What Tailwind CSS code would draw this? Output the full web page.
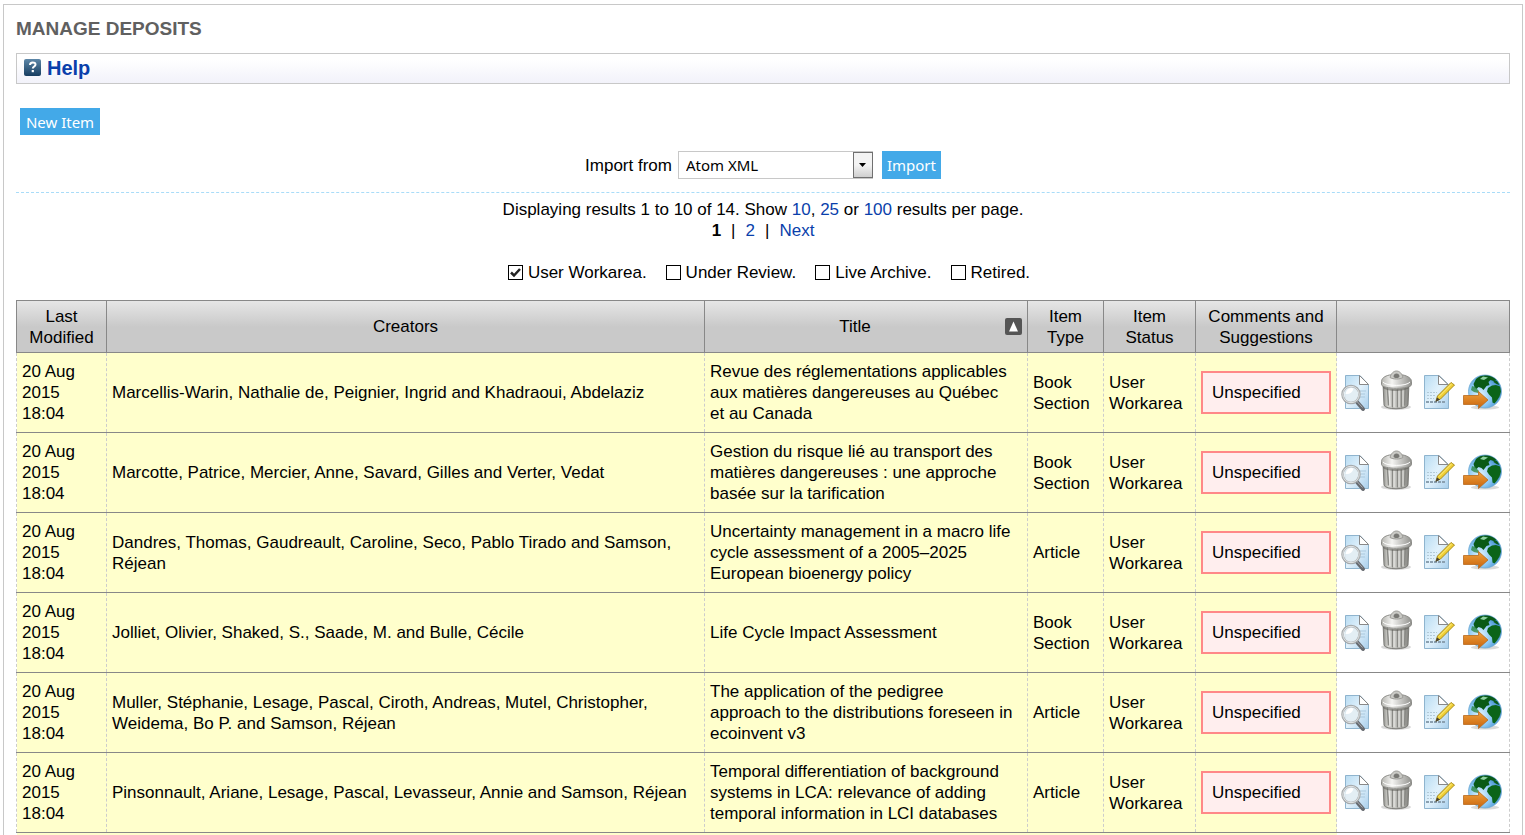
<!DOCTYPE html>
<html lang="en">
<head>
  <meta charset="UTF-8" />
  <title>Manage deposits</title>
  <script src="https://cdn.jsdelivr.net/npm/@tailwindcss/browser@4"></script>
</head>
<body class="bg-white text-black font-['Liberation_Sans',Arial,sans-serif] text-[17px] leading-[21px]">

  <!-- Icon sprite -->
  <svg class="absolute size-0" aria-hidden="true">
    <defs>
      <linearGradient id="paper" x1="0" y1="0" x2="1" y2="1">
        <stop offset="0" stop-color="#b9dcf2" /><stop offset=".5" stop-color="#e2f2fc" /><stop offset="1" stop-color="#a9cfec" />
      </linearGradient>
      <linearGradient id="metal" x1="0" x2="1">
        <stop offset="0" stop-color="#8d8d88" /><stop offset=".2" stop-color="#d8d8d4" /><stop offset=".5" stop-color="#c6c6c2" /><stop offset=".8" stop-color="#a9a9a5" /><stop offset="1" stop-color="#7f7f7b" />
      </linearGradient>
      <linearGradient id="lid" x1="0" y1="0" x2="1" y2="0">
        <stop offset="0" stop-color="#b5b5b0" /><stop offset=".35" stop-color="#f4f4f2" /><stop offset="1" stop-color="#92928e" />
      </linearGradient>
      <radialGradient id="sea" cx=".35" cy=".6" r=".7">
        <stop offset="0" stop-color="#e4f5ff" /><stop offset=".5" stop-color="#8cc8f4" /><stop offset="1" stop-color="#2f7fc4" />
      </radialGradient>
      <linearGradient id="arrow" x1="0" y1="0" x2="0" y2="1">
        <stop offset="0" stop-color="#f0a13c" /><stop offset="1" stop-color="#c8630c" />
      </linearGradient>
    </defs>
    <symbol id="icon-view" viewBox="0 0 40 46">
      <path d="M5.500 5.500H20L28.500 14.500V38.500H5.500Z" fill="url(#paper)" stroke="#8fb4ce" />
      <path d="M19.500 5.500V14.500H28.500Z" fill="#fff" stroke="#888" />
      <path d="M20 21h6M21 24h4M20 27h5" stroke="#a9c9de" />
      <path d="M17 32L23 39" stroke="#666a70" stroke-width="4" stroke-linecap="round" />
      <path d="M17 31.500L22.500 37.500" stroke="#a9adb2" />
      <circle cx="11" cy="24.500" r="8.500" fill="#e3edf3" fill-opacity=".9" stroke="#a4a8aa" stroke-width="2.500" />
      <circle cx="11" cy="24.500" r="8.200" fill="none" stroke="#e4e7e8" />
      <path d="M5.500 24a6 6 0 0 1 8-5.500c-1 4-4 6-8 5.500z" fill="#fff" />
    </symbol>
    <symbol id="icon-trash" viewBox="0 0 40 46">
      <ellipse cx="15" cy="37" rx="15" ry="3" fill="#000" opacity=".15" />
      <path d="M2 13L3 35c1 5 23 5 24 0l1-22z" fill="url(#metal)" stroke="#7c7c78" />
      <path d="M6.500 18.500l1 17M11.500 19.500v18M16.500 19.500v18M20.500 19.500v18M24.500 18.500l-1 17" stroke="#8a8a86" stroke-width="1.500" />
      <path d="M8 19l1 17M13 20v17M18 20v17M22 19.500v17" stroke="#ecece9" />
      <path d="M2 16c5 4 21 4 26 0v2c-5 4-21 4-26 0z" fill="#55554f" opacity=".5" />
      <path d="M.5 11.500c0-3 3-5.500 8-6.500h13.500c5 1 8.500 3.500 8.500 6.500v3c0 5-30 5-30 0z" fill="url(#lid)" stroke="#8b8b87" />
      <path d="M2 12c3 4.500 24 4.500 27 0" fill="none" stroke="#fff" />
      <path d="M9 7.500c1-4 3.500-6.500 6.500-6.500s5.500 2.500 6.500 6.500c-3 2-10 2-13 0z" fill="#c9c9c5" stroke="#9b9b97" />
      <path d="M12.500 6.500c0-2 1.500-3 3-3s3 1 3 3c-1 2-5 2-6 0z" fill="#787874" />
    </symbol>
    <symbol id="icon-edit" viewBox="0 0 40 46">
      <path d="M2.500 5.500H17L26.500 14.500V38.500H2.500Z" fill="url(#paper)" stroke="#8fb4ce" />
      <path d="M16.500 5.500V14.500H26Z" fill="#fff" stroke="#888" />
      <path d="M5 22.500h10M5 25.500h8M5 28.500h7" stroke="#b3cad8" stroke-dasharray="2 1" />
      <path d="M4 32h19" stroke="#8ba0b0" stroke-width="2" stroke-dasharray="3 1" />
      <path d="M14 31l1.500-5L29 12.500l3.500 2.500L18.500 29z" fill="#f0cf35" stroke="#a88a1a" />
      <path d="M17 26.500L30 13.500" stroke="#fff08a" />
      <path d="M13.500 32l1.500-4.500 3 2z" fill="#4a4232" />
    </symbol>
    <symbol id="icon-deposit" viewBox="0 0 40 46">
      <ellipse cx="22" cy="37.500" rx="14" ry="2" fill="#000" opacity=".15" />
      <circle cx="22" cy="21.500" r="16.500" fill="url(#sea)" stroke="#6fa9d2" stroke-width=".8" />
      <!-- Asia and Europe -->
      <path d="M13 9c3-3 7-4 11-3.500 4 .3 7 2 9.500 4.500l-3 1-3-1-2 2 1 3-3 1-3 4-2-2-3-1-2 2-2-2-1-3z" fill="#0a5a16" />
      <!-- Africa -->
      <path d="M25 18l4-2.500 4-.5 4 1.500 1 5-1.500 5-2.500 4-2.500 3-2-1-.5-5-3-3-2-3z" fill="#0b641a" />
      <path d="M31 10l3 1 2.500 4-3-1-3-2z" fill="#0a5a16" />
      <path d="M9 16l3 1 4 4-1 2-4-1-3-2z" fill="#1d7d2c" opacity=".7" />
      <path d="M20 6.500l5 1-4 2.500-4-1z" fill="#8fd0a0" />
      <path d="M.5 25.500H15.500V21.500L25 30L15.500 38.500V34.500H.5Z" fill="url(#arrow)" stroke="#b86a1e" stroke-width=".8" />
    </symbol>
  </svg>

  <div class="min-h-screen pt-1 pl-[3px] pr-[2px]">
    <main class="border border-b-0 border-[#c8c8c8] px-3 pt-3 min-h-[calc(100vh-4px)]">
      <h1 class="text-[19px] leading-6 font-bold text-[#606060] uppercase">Manage deposits</h1>

      <!-- Help -->
      <div class="mt-3 h-[31px] px-[7px] pb-[2px] flex items-center border border-[#c8c8c8] bg-linear-to-b from-white from-20% to-[#f2f2fa]">
        <a href="#help" class="flex items-center gap-[6px] text-xl leading-6 font-bold text-[#0a3fab]">
          <svg class="size-[17px]" viewBox="0 0 17 17" aria-hidden="true">
            <defs>
              <linearGradient id="helpBg" x1="0" y1="0" x2="0" y2="1"><stop offset="0" stop-color="#5d87a8" /><stop offset="1" stop-color="#173d60" /></linearGradient>
            </defs>
            <rect width="17" height="17" rx="2" fill="url(#helpBg)" />
            <path d="M6 6c0-3.500 5.500-3.200 5.500-.5 0 2-2.700 1.900-2.700 4" fill="none" stroke="#fff" stroke-width="2" />
            <rect x="7.700" y="11" width="2.200" height="2.200" fill="#fff" />
          </svg>
          Help
        </a>
      </div>

      <button type="button" class="mt-6 ml-1 block h-[27px] w-20 bg-[#43a9e8] text-white text-[15px] leading-7 font-['Noto_Sans',sans-serif]">New Item</button>

      <!-- Import -->
      <form class="mt-4 pb-[13px] flex justify-center items-center border-b border-dashed border-[#a9dcf8]">
        <label for="importFrom">Import from</label>
        <div class="relative ml-[6px]">
          <select id="importFrom" class="appearance-none block w-[195px] h-7 pl-[7px] border border-[#c8c8c8] bg-white text-[15px] font-['Noto_Sans',sans-serif]">
            <option>Atom XML</option>
          </select>
          <span class="pointer-events-none absolute right-0 top-px bottom-px w-5 flex items-center justify-center border border-[#707070] bg-linear-to-b from-[#f3f3f3] from-50% to-[#cfcfcf]">
            <svg class="w-[7px] h-1" viewBox="0 0 7 4"><path d="M0 0h7L3.500 4z" /></svg>
          </span>
        </div>
        <button type="button" class="ml-[9px] h-7 w-[59px] bg-[#43a9e8] text-white text-[15px] leading-7 font-['Noto_Sans',sans-serif]">Import</button>
      </form>

      <!-- Paging -->
      <div class="mt-[6px] text-center">
        <p>Displaying results 1 to 10 of 14. Show <a href="#10" class="text-[#0a3fab]">10</a>, <a href="#25" class="text-[#0a3fab]">25</a> or <a href="#100" class="text-[#0a3fab]">100</a> results per page.</p>
        <p class="flex justify-center gap-[10px]"><b>1</b><span>|</span><a href="#p2" class="text-[#0a3fab]">2</a><span>|</span><a href="#next" class="text-[#0a3fab]">Next</a></p>
      </div>

      <!-- Status filters -->
      <div id="filters" class="mt-[21px] mb-[17px] ml-3 flex justify-center gap-[19px]"></div>

      <table class="w-full table-fixed border-collapse">
        <colgroup>
          <col class="w-[90px]" />
          <col />
          <col class="w-[323px]" />
          <col class="w-[76px]" />
          <col class="w-[92px]" />
          <col class="w-[141px]" />
          <col class="w-[173px]" />
        </colgroup>
        <thead>
          <tr class="h-[52px] bg-linear-to-b from-[#e6e6e6] to-[#c9c9c9] to-50% *:border *:border-[#888] *:px-[5px] *:font-normal">
            <th>Last Modified</th>
            <th>Creators</th>
            <th>
              <div class="flex items-center">
                <span class="flex-1 pr-[5px]">Title</span>
                <svg class="size-[17px]" viewBox="0 0 17 17" aria-label="Sorted ascending">
                  <rect width="17" height="17" rx="2" fill="#555" />
                  <path d="M8.500 3.500L13 13.500H4Z" fill="#fff" />
                </svg>
              </div>
            </th>
            <th>Item Type</th>
            <th>Item Status</th>
            <th>Comments and Suggestions</th>
            <th></th>
          </tr>
        </thead>
        <tbody id="deposits"></tbody>
      </table>
    </main>
  </div>

  <script>
    const filters = [
      ["User Workarea.", true],
      ["Under Review.", false],
      ["Live Archive.", false],
      ["Retired.", false],
    ];

    document.getElementById("filters").innerHTML = filters.map(([name, on]) => `
      <label class="flex items-center gap-[5px]">
        <input type="checkbox" ${on ? "checked" : ""} class="peer appearance-none size-[15px] border border-black bg-white" />
        <svg class="hidden peer-checked:block size-[11px] -ml-[18px] mr-[2px]" viewBox="0 0 11 11"><path d="M1 5.500L4 8.500L10 2" fill="none" stroke="#222" stroke-width="2.500" /></svg>
        <span>${name}</span>
      </label>`).join("");

    const deposits = [
      ["Marcellis-Warin, Nathalie de, Peignier, Ingrid and Khadraoui, Abdelaziz", "Revue des réglementations applicables aux matières dangereuses au Québec et au Canada", "Book Section"],
      ["Marcotte, Patrice, Mercier, Anne, Savard, Gilles and Verter, Vedat", "Gestion du risque lié au transport des matières dangereuses : une approche basée sur la tarification", "Book Section"],
      ["Dandres, Thomas, Gaudreault, Caroline, Seco, Pablo Tirado and Samson, Réjean", "Uncertainty management in a macro life cycle assessment of a 2005–2025 European bioenergy policy", "Article"],
      ["Jolliet, Olivier, Shaked, S., Saade, M. and Bulle, Cécile", "Life Cycle Impact Assessment", "Book Section"],
      ["Muller, Stéphanie, Lesage, Pascal, Ciroth, Andreas, Mutel, Christopher, Weidema, Bo P. and Samson, Réjean", "The application of the pedigree approach to the distributions foreseen in ecoinvent v3", "Article"],
      ["Pinsonnault, Ariane, Lesage, Pascal, Levasseur, Annie and Samson, Réjean", "Temporal differentiation of background systems in LCA: relevance of adding temporal information in LCI databases", "Article"],
    ];

    const actions = [
      ["View item", "#icon-view"],
      ["Destroy item", "#icon-trash"],
      ["Edit item", "#icon-edit"],
      ["Deposit item", "#icon-deposit"],
    ];

    const buttons = actions.map(([label, icon]) => `
      <button type="button" aria-label="${label}" class="w-[41px]"><svg class="w-10 h-[46px]"><use href="${icon}" /></svg></button>`).join("");

    document.getElementById("deposits").innerHTML = deposits.map(([creators, title, type]) => `
      <tr class="h-20 *:border-x *:border-dashed *:border-x-[#ccc] *:border-b *:border-b-[#888] *:[border-bottom-style:solid] *:px-[5px]">
        <td class="bg-[#ffffcc]">20 Aug 2015 18:04</td>
        <td class="bg-[#ffffcc]">${creators}</td>
        <td class="bg-[#ffffcc]"><div class="pr-[7px]">${title}</div></td>
        <td class="bg-[#ffffcc]">${type}</td>
        <td class="bg-[#ffffcc]">User Workarea</td>
        <td class="bg-[#ffffcc]"><div class="border-2 border-[#ff8888] bg-[#ffeeee] px-[9px] py-[9px]">Unspecified</div></td>
        <td><div class="-mx-[2px] flex">${buttons}</div></td>
      </tr>`).join("") + `
      <tr class="h-[2px]"><td colspan="6" class="bg-[#ffffcc]"></td><td></td></tr>`;
  </script>
</body>
</html>
